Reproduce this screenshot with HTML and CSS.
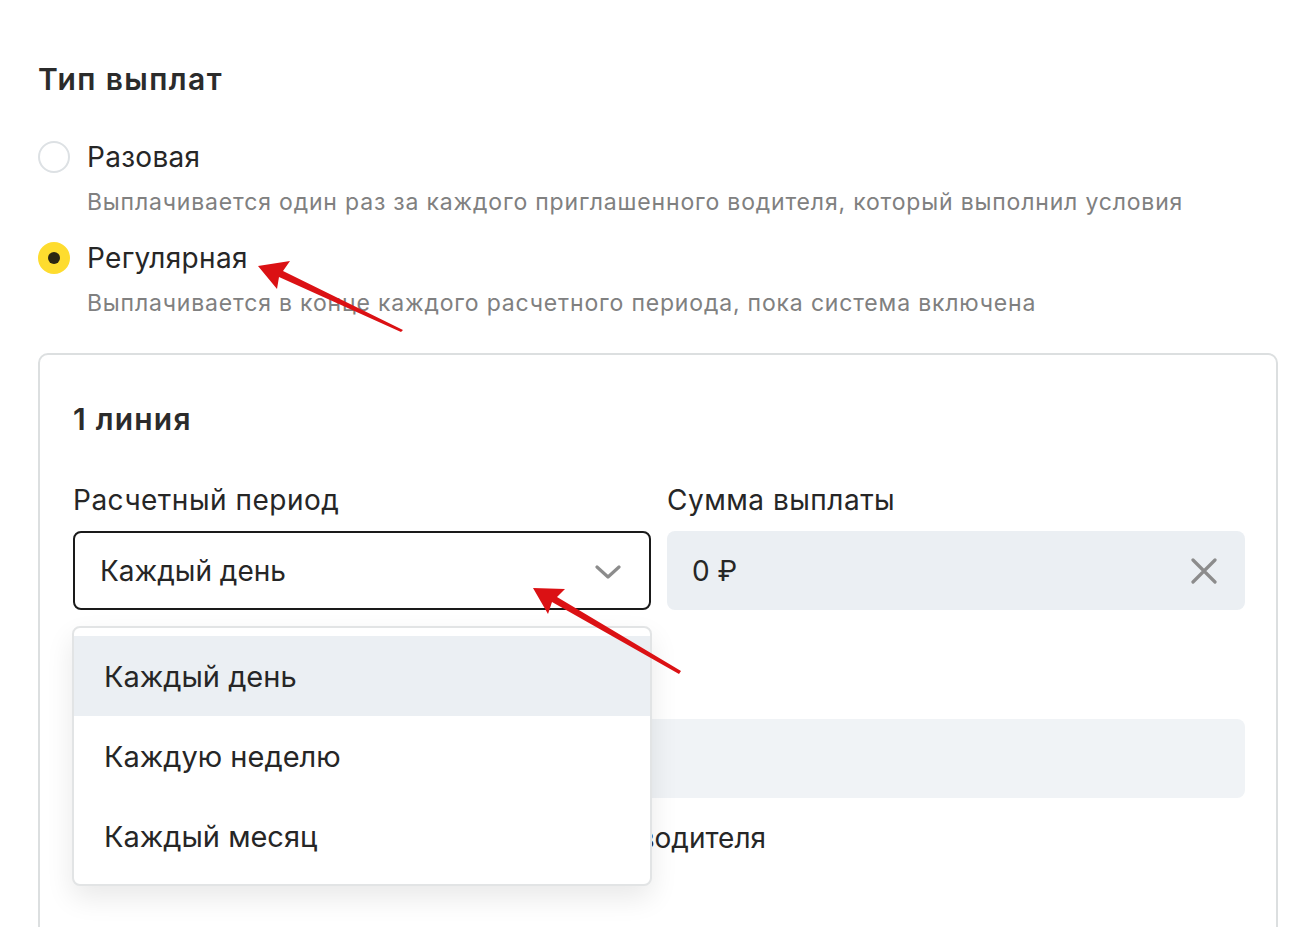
FILE: index.html
```html
<!DOCTYPE html>
<html lang="ru">
<head>
<meta charset="utf-8">
<link rel="stylesheet" href="styles.css">
</head>
<body>
<div class="page">
  <h2 class="section-title">Тип выплат</h2>
  <div class="radio-group">
    <div class="radio-option">
      <div class="radio-head">
        <span class="radio"></span>
        <span class="radio-label">Разовая</span>
      </div>
      <div class="radio-desc">Выплачивается один раз за каждого приглашенного водителя, который выполнил условия</div>
    </div>
    <div class="radio-option">
      <div class="radio-head">
        <span class="radio radio-checked"><span class="radio-dot"></span></span>
        <span class="radio-label">Регулярная</span>
      </div>
      <div class="radio-desc">Выплачивается в конце каждого расчетного периода, пока система включена</div>
    </div>
  </div>

  <div class="card">
    <h3 class="card-title">1 линия</h3>
    <div class="fields">
      <div class="field">
        <div class="field-label">Расчетный период</div>
        <div class="select-wrap">
          <div class="select">
            <span>Каждый день</span>
            <svg class="chevron" width="26" height="16" viewBox="0 0 26 16"><path d="M2 3 L13 13 L24 3" fill="none" stroke="#8c8c8c" stroke-width="3.2" stroke-linecap="round" stroke-linejoin="round"/></svg>
          </div>
          <div class="dropdown">
            <div class="dd-item dd-active">Каждый день</div>
            <div class="dd-item">Каждую неделю</div>
            <div class="dd-item">Каждый месяц</div>
          </div>
        </div>
      </div>
      <div class="field">
        <div class="field-label">Сумма выплаты</div>
        <div class="input">
          <span>0 ₽</span>
          <svg class="clear" width="26" height="26" viewBox="0 0 26 26"><path d="M2 2 L24 24 M24 2 L2 24" fill="none" stroke="#8c8c8c" stroke-width="3.2" stroke-linecap="round"/></svg>
        </div>
      </div>
      <div class="field field-wide">
        <div class="field-label">Максимальная сумма выплат</div>
        <div class="input"></div>
      </div>
    </div>
    <div class="check-row">
      <span class="checkbox"></span>
      <span class="check-label">Выплачивать только за активного водителя</span>
    </div>
  </div>
</div>

<svg class="arrows" width="1309" height="927" viewBox="0 0 1309 927">
  <g fill="#db1114">
    <path d="M258 266 L290 261 L283 271 L403 330 L401 332 L279 277 L277 289 Z"/>
    <path d="M533 588 L565 589 L557 597 L681 671 L679 674 L552 602 L548 614 Z"/>
  </g>
</svg>
</body>
</html>
```

FILE: styles.css
```css
* { box-sizing: border-box; }
html, body { margin: 0; padding: 0; background: #fff; }
body {
  font-family: "Inter", "Liberation Sans", Arial, sans-serif;
  color: #262626;
  overflow: hidden;
  width: 1309px;
  height: 927px;
  position: relative;
}
.page {
  padding: 60px 31px 0 38px;
}
.section-title {
  margin: 0;
  font-size: 30px;
  font-weight: 600;
  letter-spacing: 1.4px;
  line-height: 38px;
  color: #2b2b2b;
}
.radio-group {
  margin-top: 41px;
  display: flex;
  flex-direction: column;
  gap: 23px;
}
.radio-head {
  display: flex;
  align-items: center;
  gap: 17px;
  height: 36px;
}
.radio {
  width: 32px;
  height: 32px;
  border-radius: 50%;
  border: 2px solid #dde1e4;
  display: flex;
  align-items: center;
  justify-content: center;
  flex: none;
}
.radio-checked {
  background: #fedc2f;
  border-color: #fedc2f;
}
.radio-dot {
  width: 12px;
  height: 12px;
  border-radius: 50%;
  background: #2c2612;
}
.radio-label {
  font-size: 28px;
  letter-spacing: 0.3px;
  color: #262626;
}
.radio-desc {
  margin-top: 12px;
  padding-left: 49px;
  font-size: 23px;
  letter-spacing: 0.82px;
  line-height: 30px;
  color: #808080;
}
.card {
  margin-top: 35px;
  border: 2px solid #dcdfe0;
  border-radius: 10px;
  padding: 44px 32px 60px 33px;
  height: 620px;
}
.card-title {
  margin: 0;
  font-size: 30px;
  font-weight: 600;
  letter-spacing: 1.2px;
  line-height: 40px;
  color: #2b2b2b;
}
.fields {
  margin-top: 43px;
  display: grid;
  grid-template-columns: 578px 578px;
  column-gap: 16px;
  row-gap: 60px;
}
.field-wide { grid-column: 1 / 3; }
.field-label {
  font-size: 28px;
  letter-spacing: 0.5px;
  line-height: 36px;
  color: #262626;
  margin-bottom: 13px;
}
.select-wrap { position: relative; }
.select {
  height: 79px;
  border: 2px solid #1a1a1a;
  border-radius: 8px;
  display: flex;
  align-items: center;
  justify-content: space-between;
  padding: 0 28px 0 25px;
  font-size: 28px;
  color: #262626;
}
.chevron { margin-top: 2px; }
.input {
  height: 79px;
  background: #ebeff3;
  border-radius: 8px;
  display: flex;
  align-items: center;
  justify-content: space-between;
  padding: 0 28px 0 25px;
  font-size: 28px;
  color: #262626;
}
.field-wide .input { background: #f0f3f6; }
.dropdown {
  position: absolute;
  top: 95px;
  left: -1px;
  width: 580px;
  background: #fff;
  border: 2px solid #e2e4e5;
  border-radius: 8px;
  padding: 8px 0 8px;
  box-shadow: 0 12px 28px rgba(0, 0, 0, 0.09);
  z-index: 5;
}
.dd-item {
  height: 80px;
  display: flex;
  align-items: center;
  padding-left: 30px;
  font-size: 29px;
  color: #262626;
}
.dd-active { background: #ebeff3; }
.check-row {
  margin-top: 20px;
  display: flex;
  align-items: center;
  gap: 16px;
  height: 40px;
}
.checkbox {
  width: 32px;
  height: 32px;
  border: 2px solid #dde1e4;
  border-radius: 6px;
}
.check-label {
  font-size: 28px;
  color: #262626;
  padding-left: 45px;
}
.arrows {
  position: absolute;
  left: 0;
  top: 0;
  pointer-events: none;
  z-index: 10;
}
```
